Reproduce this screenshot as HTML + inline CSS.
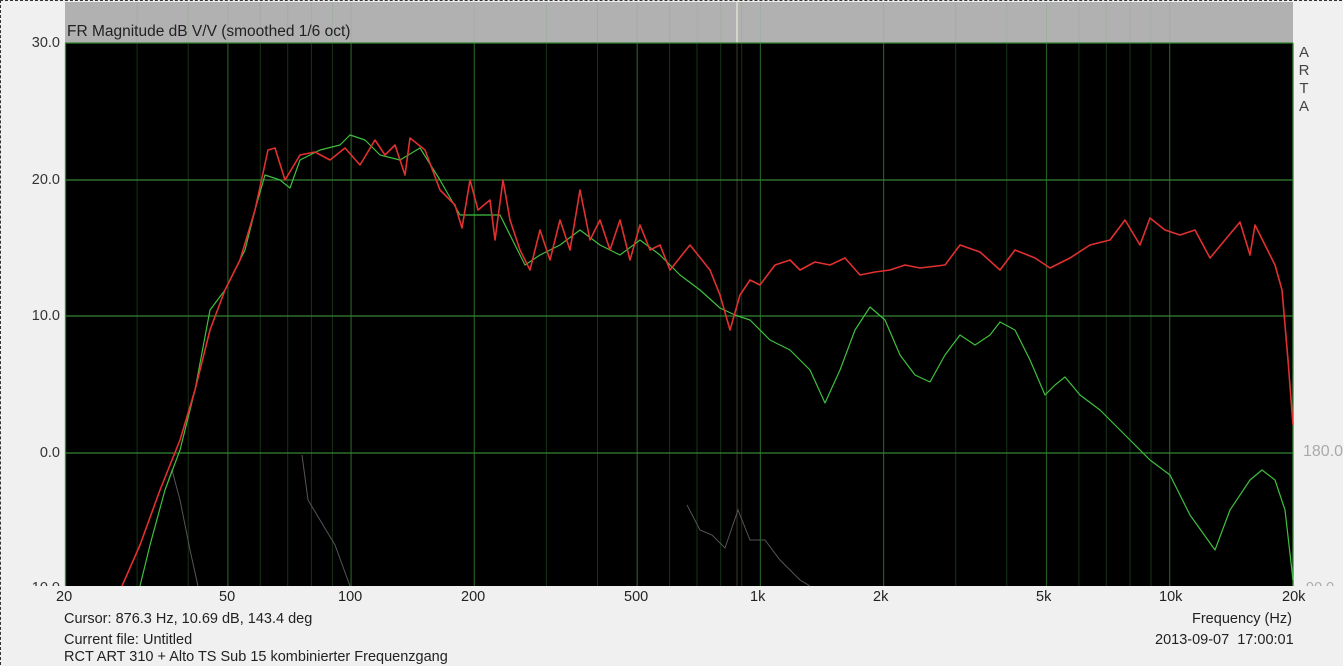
<!DOCTYPE html>
<html><head><meta charset="utf-8"><style>
html,body{margin:0;padding:0;background:#f0f0f0;}
body{width:1343px;height:666px;overflow:hidden;position:relative;font-family:"Liberation Sans",Arial,sans-serif;}
.b{position:absolute;left:0;top:0;width:1341px;height:664px;border:1px dashed #333;border-right:none;border-bottom:none;}
.t{position:absolute;font-size:14.5px;color:#222;white-space:nowrap;line-height:16px;}
.yl{position:absolute;font-size:14.5px;color:#333;width:56px;text-align:right;left:4px;}
</style></head><body>
<div class="b"></div>
<svg width="1343" height="666" style="position:absolute;left:0;top:0">
<rect x="65" y="2" width="1228" height="41" fill="#b1b1b1"/>
<rect x="65" y="43" width="1228" height="543" fill="#000"/>
<g stroke="#173317" stroke-width="1">
<path d="M137.1 43V586M188.2 43V586M260.3 43V586M287.7 43V586M311.4 43V586M332.4 43V586M546.4 43V586M597.5 43V586M669.6 43V586M697 43V586M720.7 43V586M741.7 43V586M955.7 43V586M1006.8 43V586M1078.9 43V586M1106.3 43V586M1130 43V586M1151 43V586"/>
</g>
<g stroke="#a3aea3" stroke-width="1">
<path d="M137.1 2V43M188.2 2V43M227.9 2V43M260.3 2V43M287.7 2V43M311.4 2V43M332.4 2V43M351.1 2V43M474.3 2V43M546.4 2V43M597.5 2V43M637.2 2V43M669.6 2V43M697 2V43M720.7 2V43M741.7 2V43M760.4 2V43M883.6 2V43M955.7 2V43M1006.8 2V43M1046.5 2V43M1078.9 2V43M1106.3 2V43M1130 2V43M1151 2V43M1169.7 2V43"/>
</g>
<g stroke="#235a23" stroke-width="1.2">
<path d="M227.9 43V586M351.1 43V586M474.3 43V586M637.2 43V586M760.4 43V586M883.6 43V586M1046.5 43V586M1169.7 43V586"/>
</g>
<path d="M737 2V43" stroke="#e0e0d0" stroke-width="1.5"/>
<path d="M737 43V586" stroke="#3a3a30" stroke-width="1"/>
<g stroke="#358535" stroke-width="1.3">
<path d="M65 43H1293M65 180H1293M65 316H1293M65 453H1293M65.5 43V586M1293 43V586"/>
</g>
<g fill="none" stroke="#555" stroke-width="1">
<path d="M165 490L172 470L180 500L190 550L198 586"/>
<path d="M302 455L308 500L320 520L335 545L350 586"/>
<path d="M687 505L700 530L712 535L725 548L738 510L750 540L765 540L780 560L800 580L810 586"/>
</g>
<g fill="none" stroke-linejoin="round">
<path stroke="#3fbf3f" stroke-width="1.2" d="M140 586L150 545L165 490L180 450L195 390L210 310L225 290L245 250L255 210L265 175L280 180L290 188L300 160L320 150L340 145L350 135L365 140L380 155L400 160L420 148L440 180L460 215L480 215L500 215L510 235L525 265L540 255L560 245L580 230L600 245L620 255L640 240L660 255L680 275L700 290L720 308L735 315L750 320L770 340L790 350L810 370L825 403L840 370L855 330L870 307L885 320L900 355L915 375L930 382L945 355L960 335L975 345L990 335L1000 322L1015 330L1030 360L1045 395L1055 385L1065 377L1080 395L1100 410L1130 440L1150 460L1170 475L1190 515L1215 550L1230 510L1250 480L1262 470L1275 480L1285 510L1293 580"/>
<path stroke="#e03030" stroke-width="1.6" d="M122 586L140 545L160 490L180 440L195 390L210 330L225 290L240 260L255 210L268 150L275 148L285 180L300 155L315 152L330 160L345 148L360 165L375 140L385 155L395 145L405 175L410 138L425 150L440 190L455 205L462 228L470 180L478 210L490 200L495 240L503 180L510 220L520 250L530 270L540 230L550 260L560 220L570 250L580 190L590 240L600 220L610 250L620 220L630 260L640 225L650 250L660 245L670 270L690 245L710 270L720 295L730 330L740 295L750 280L760 285L775 265L790 260L800 270L815 262L830 265L845 258L860 275L875 272L890 270L905 265L920 268L945 265L960 245L980 252L1000 270L1015 250L1035 258L1050 268L1070 258L1090 245L1110 240L1125 220L1140 245L1150 218L1165 230L1180 235L1195 230L1210 258L1225 240L1240 222L1250 255L1255 225L1265 245L1275 265L1282 290L1288 360L1293 425"/>
</g>
</svg>
<div class="t" style="left:67px;top:24px;font-size:15.5px;">FR Magnitude dB V/V (smoothed 1/6 oct)</div>
<div class="yl" style="top:35px">30.0</div>
<div class="yl" style="top:172px">20.0</div>
<div class="yl" style="top:308px">10.0</div>
<div class="yl" style="top:445px">0.0</div>
<div class="yl" style="top:580px;height:6px;overflow:hidden">-10.0</div>
<div class="t" style="left:1298px;top:44px;font-size:15px;color:#444;line-height:18px;width:12px;text-align:center">A<br>R<br>T<br>A</div>
<div class="t" style="left:1303px;top:444px;font-size:16px;color:#aaa">180.0</div>
<div class="t" style="left:1306px;top:580px;height:6px;overflow:hidden;color:#aaa">90.0</div>
<div class="t" style="left:56px;top:589px">20</div>
<div class="t" style="left:219px;top:589px">50</div>
<div class="t" style="left:338px;top:589px">100</div>
<div class="t" style="left:461px;top:589px">200</div>
<div class="t" style="left:624px;top:589px">500</div>
<div class="t" style="left:750px;top:589px">1k</div>
<div class="t" style="left:873px;top:589px">2k</div>
<div class="t" style="left:1036px;top:589px">5k</div>
<div class="t" style="left:1159px;top:589px">10k</div>
<div class="t" style="left:1282px;top:589px">20k</div>
<div class="t" style="left:64px;top:611px">Cursor: 876.3 Hz, 10.69 dB, 143.4 deg</div>
<div class="t" style="left:64px;top:632px">Current file: Untitled</div>
<div class="t" style="left:64px;top:649px">RCT ART 310 + Alto TS Sub 15 kombinierter Frequenzgang</div>
<div class="t" style="left:1192px;top:611px">Frequency (Hz)</div>
<div class="t" style="left:1155px;top:632px">2013-09-07&nbsp; 17:00:01</div>
</body></html>
